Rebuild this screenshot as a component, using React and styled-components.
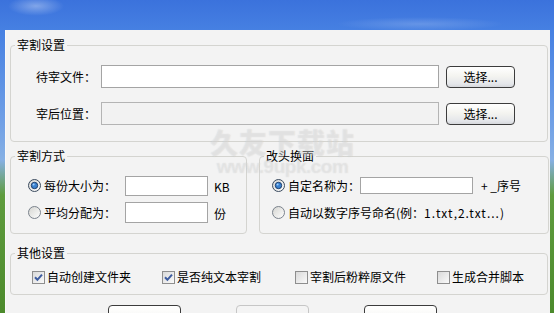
import React from 'react';
import styled, { createGlobalStyle } from 'styled-components';

const Global = createGlobalStyle`
  html, body { margin: 0; padding: 0; }
  body {
    width: 554px; height: 313px; overflow: hidden;
    font-family: "Noto Sans CJK SC", "Noto Sans", sans-serif;
    font-size: 12px; color: #000;
  }
`;

const Desktop = styled.div`
  position: relative;
  width: 554px; height: 313px; overflow: hidden;
  box-sizing: border-box;
  padding: 30px 4px 0 5px;
  background:
    radial-gradient(ellipse 40px 14px at 36px 6px, rgba(255,255,255,0.35), rgba(255,255,255,0) 70%),
    radial-gradient(ellipse 120px 10px at 420px 24px, rgba(255,255,255,0.18), rgba(255,255,255,0) 70%),
    linear-gradient(180deg, #3b72dc 0px, #4680e2 30px, #6f9fe6 120px, #86b0e4 160px, #5f9c3e 195px, #4c8a2c 313px);
`;

const Window = styled.div`
  width: 545px; height: 300px;
  box-sizing: border-box;
  background: #f3f3f3;
  border-left: 1px solid #f9f9f9;
  padding: 8px 0 0 4px;
  display: flex; flex-direction: column;
`;

const Group = styled.fieldset`
  margin: 0;
  min-width: 0;
  box-sizing: border-box;
  width: ${p => p.$w}px;
  padding: ${p => p.$pt}px 0 ${p => p.$pb}px ${p => p.$pl}px;
  border: 1px solid #d4d4d0;
  border-radius: 4px;
`;

const Legend = styled.legend`
  padding: 0 2px;
  margin-left: ${p => 4 - p.$pl}px;
  font-size: 12px;
  line-height: 14px;
  color: #000;
`;

const FileRow = styled.div`
  display: flex; align-items: center;
  height: 23px;
  & + & { margin-top: 14px; }
`;

const RowLabel = styled.span`
  width: ${p => p.$w}px;
  flex: none;
  white-space: nowrap;
  line-height: 16px;
`;

const Ascii = styled.span`
  letter-spacing: 1px;
`;

const TextBox = styled.div`
  flex: none;
  box-sizing: border-box;
  width: ${p => p.$w}px;
  height: ${p => p.$h}px;
  margin-left: ${p => p.$ml || 0}px;
  background: ${p => (p.$disabled ? '#f2f2f2' : '#ffffff')};
  border: 1px solid ${p => (p.$disabled ? '#b4b4b4' : '#a4a4a4')};
`;

const PickButton = styled.button`
  flex: none;
  margin-left: 7px;
  width: 69px; height: 22px;
  box-sizing: border-box;
  padding: 0;
  border: 1px solid #3c3c3c;
  border-radius: 4px;
  background: linear-gradient(180deg, #ffffff 0%, #f4f4f0 45%, #e4e6ea 85%, #d6d8dc 100%);
  font-family: inherit; font-size: 12px; color: #000;
  line-height: 16px;
`;

const Middle = styled.div`
  display: flex;
  gap: 12px;
  margin-top: ${p => p.$mt}px;
`;

const OptRow = styled.div`
  display: flex; align-items: center;
  height: 21px;
  & + & { margin-top: 6px; }
`;

const Unit = styled.span`
  margin-left: ${p => p.$ml}px;
  white-space: nowrap;
  line-height: 16px;
  padding-top: ${p => p.$pt || 0}px;
`;

const RadioWrap = styled.span`
  display: inline-flex;
  width: 13px; height: 13px;
  margin-right: 3px;
  flex: none;
`;

const CheckRow = styled.div`
  display: grid;
  grid-template-columns: 130px 133px 142px auto;
  height: 16px;
  align-items: center;
`;

const CheckItem = styled.label`
  display: flex; align-items: center;
  white-space: nowrap;
  line-height: 16px;
`;

const BoxWrap = styled.span`
  display: inline-flex;
  width: 13px; height: 13px;
  margin-right: 2px;
  flex: none;
`;

const BottomBar = styled.div`
  display: flex;
  gap: 55px;
  margin-top: 10px;
  padding-left: 98px;
`;

const BigButton = styled.button`
  width: 73px; height: 30px;
  box-sizing: border-box;
  padding: 0;
  border: 1px solid ${p => (p.$disabled ? '#c6c6c6' : '#3c3c3c')};
  border-radius: 4px;
  background: ${p => (p.$disabled ? '#f4f4f4' : 'linear-gradient(180deg, #ffffff 0%, #f4f4f0 60%, #e2e4e8 100%)')};
  color: ${p => (p.$disabled ? '#a0a0a0' : '#000')};
  font-family: inherit; font-size: 12px;
`;

const Watermark = styled.div`
  position: absolute;
  left: 210px; top: 126px;
  display: flex; flex-direction: column; align-items: center;
  pointer-events: none;
  color: rgba(255, 255, 255, 0.3);
  text-shadow: 0 0 1px rgba(150,150,150,0.3);
  font-family: "Noto Sans CJK SC", sans-serif;
  font-weight: 900;
`;

const WmTitle = styled.div`
  font-size: 28px;
  line-height: 32px;
  letter-spacing: 1px;
`;

const WmUrl = styled.div`
  font-family: "Liberation Sans", sans-serif;
  font-size: 19px;
  line-height: 18px;
  letter-spacing: -0.5px;
`;

function Radio({ checked }) {
  const id = checked ? 'rgc' : 'rgu';
  return (
    <RadioWrap>
      <svg width="13" height="13" viewBox="0 0 13 13">
        <defs>
          <linearGradient id={id} x1="0" y1="0" x2="1" y2="1">
            <stop offset="0" stopColor="#d4d4d0" />
            <stop offset="1" stopColor="#ffffff" />
          </linearGradient>
        </defs>
        <circle cx="6.5" cy="6.5" r="6" fill={`url(#${id})`} stroke={checked ? '#3a4a5e' : '#7a828c'} strokeWidth="1" />
        {checked && <circle cx="6.5" cy="6.5" r="3.2" fill="#3b82d0" stroke="#1e3e6a" strokeWidth="1" />}
        {checked && <circle cx="5.6" cy="5.6" r="1" fill="#9fd0ff" />}
      </svg>
    </RadioWrap>
  );
}

function Check({ checked }) {
  return (
    <BoxWrap>
      <svg width="13" height="13" viewBox="0 0 13 13">
        <defs>
          <linearGradient id="cbg" x1="0" y1="0" x2="1" y2="1">
            <stop offset="0" stopColor="#d8d8d8" />
            <stop offset="1" stopColor="#fbfbfb" />
          </linearGradient>
        </defs>
        <rect x="0.5" y="0.5" width="12" height="12" fill="url(#cbg)" stroke="#8e8e8e" />
        {checked && <path d="M3 6.3 L5.4 8.8 L10 3.6" fill="none" stroke="#3d5ca0" strokeWidth="2" />}
      </svg>
    </BoxWrap>
  );
}

export default function App() {
  return (
    <>
      <Global />
      <Desktop>
        <Window>
          <Group $w={538} $pt={13} $pb={16} $pl={25}>
            <Legend $pl={25}>宰割设置</Legend>
            <FileRow>
              <RowLabel $w={65}>待宰文件：</RowLabel>
              <TextBox $w={338} $h={23} />
              <PickButton>选择...</PickButton>
            </FileRow>
            <FileRow>
              <RowLabel $w={65}>宰后位置：</RowLabel>
              <TextBox $w={338} $h={23} $disabled />
              <PickButton>选择...</PickButton>
            </FileRow>
          </Group>

          <Middle $mt={7}>
            <Group $w={237} $pt={12} $pb={10} $pl={17}>
              <Legend $pl={17}>宰割方式</Legend>
              <OptRow>
                <Radio checked />
                <RowLabel $w={81}>每份大小为：</RowLabel>
                <TextBox $w={83} $h={20} />
                <Unit $ml={6} $pt={3}>KB</Unit>
              </OptRow>
              <OptRow>
                <Radio />
                <RowLabel $w={81}>平均分配为：</RowLabel>
                <TextBox $w={83} $h={21} />
                <Unit $ml={6} $pt={3}>份</Unit>
              </OptRow>
            </Group>
            <Group $w={290} $pt={12} $pb={10} $pl={12}>
              <Legend $pl={12}>改头换面</Legend>
              <OptRow>
                <Radio checked />
                <RowLabel $w={72}>自定名称为：</RowLabel>
                <TextBox $w={113} $h={17} />
                <Unit $ml={8}>+ _序号</Unit>
              </OptRow>
              <OptRow>
                <Radio />
                <RowLabel $w={240}>自动以数字序号命名(例：<Ascii>1.txt,2.txt...</Ascii>)</RowLabel>
              </OptRow>
            </Group>
          </Middle>

          <Middle $mt={12}>
            <Group $w={538} $pt={9} $pb={9} $pl={21}>
              <Legend $pl={21}>其他设置</Legend>
              <CheckRow>
                <CheckItem><Check checked />自动创建文件夹</CheckItem>
                <CheckItem><Check checked />是否纯文本宰割</CheckItem>
                <CheckItem><Check />宰割后粉粹原文件</CheckItem>
                <CheckItem><Check />生成合并脚本</CheckItem>
              </CheckRow>
            </Group>
          </Middle>

          <BottomBar>
            <BigButton aria-label="开始" />
            <BigButton $disabled aria-label="停止" />
            <BigButton aria-label="退出" />
          </BottomBar>
        </Window>
        <Watermark>
          <WmTitle>久友下载站</WmTitle>
          <WmUrl>www.9upk.com</WmUrl>
        </Watermark>
      </Desktop>
    </>
  );
}
